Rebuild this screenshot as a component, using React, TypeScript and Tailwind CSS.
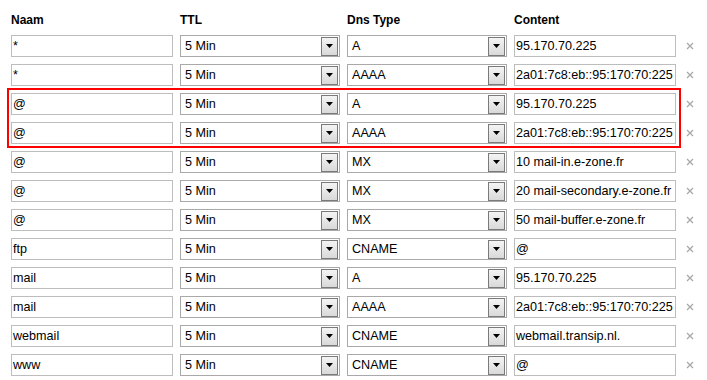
type DnsRow = {
  name: string;
  ttl: string;
  type: string;
  content: string;
};

const rows: DnsRow[] = [
  { name: "*", ttl: "5 Min", type: "A", content: "95.170.70.225" },
  { name: "*", ttl: "5 Min", type: "AAAA", content: "2a01:7c8:eb::95:170:70:225" },
  { name: "@", ttl: "5 Min", type: "A", content: "95.170.70.225" },
  { name: "@", ttl: "5 Min", type: "AAAA", content: "2a01:7c8:eb::95:170:70:225" },
  { name: "@", ttl: "5 Min", type: "MX", content: "10 mail-in.e-zone.fr" },
  { name: "@", ttl: "5 Min", type: "MX", content: "20 mail-secondary.e-zone.fr" },
  { name: "@", ttl: "5 Min", type: "MX", content: "50 mail-buffer.e-zone.fr" },
  { name: "ftp", ttl: "5 Min", type: "CNAME", content: "@" },
  { name: "mail", ttl: "5 Min", type: "A", content: "95.170.70.225" },
  { name: "mail", ttl: "5 Min", type: "AAAA", content: "2a01:7c8:eb::95:170:70:225" },
  { name: "webmail", ttl: "5 Min", type: "CNAME", content: "webmail.transip.nl." },
  { name: "www", ttl: "5 Min", type: "CNAME", content: "@" },
];

function TextBox({ value }: { value: string }) {
  return (
    <div className="flex h-[22px] w-[162px] shrink-0 items-center overflow-hidden whitespace-nowrap border border-[#bdbdbd] bg-white pl-[1px] text-black">
      {value}
    </div>
  );
}

function SelectBox({ value }: { value: string }) {
  return (
    <div className="flex h-[22px] w-[160px] shrink-0 items-center justify-between border border-[#a9a9a9] bg-white pl-[4px] pr-[1px] text-black">
      <span className="whitespace-nowrap">{value}</span>
      <div className="flex h-[19px] w-[17px] items-center justify-center border border-[#7a7a7a] bg-[linear-gradient(#f4f4f4,#d9d9d9)]">
        <svg width="7" height="4" viewBox="0 0 7 4">
          <path d="M0 0h7L3.5 4z" fill="#000" />
        </svg>
      </div>
    </div>
  );
}

function RemoveIcon() {
  return (
    <svg width="8" height="8" viewBox="0 0 8 8" className="ml-[10px] shrink-0">
      <path d="M1 1l6 6M7 1L1 7" stroke="#a8a8a8" strokeWidth="1.3" />
    </svg>
  );
}

function Row({ row }: { row: DnsRow }) {
  return (
    <div className="flex h-[22px] items-center gap-[7px]">
      <TextBox value={row.name} />
      <SelectBox value={row.ttl} />
      <SelectBox value={row.type} />
      <div className="flex items-center">
        <TextBox value={row.content} />
        <RemoveIcon />
      </div>
    </div>
  );
}

export default function App() {
  const before = rows.slice(0, 2);
  const marked = rows.slice(2, 4);
  const after = rows.slice(4);

  return (
    <div className="h-[380px] w-[707px] overflow-hidden bg-white pl-[11px] pt-[13px] font-['Liberation_Sans',Arial,sans-serif] text-[12.6px]">
      <div className="flex h-[15px] items-center gap-[7px] text-[12px] font-bold leading-[15px] text-black">
        <div className="w-[162px]">Naam</div>
        <div className="w-[160px]">TTL</div>
        <div className="w-[160px]">Dns Type</div>
        <div className="w-[162px]">Content</div>
      </div>

      <div className="mt-[7px] flex flex-col gap-[7px]">
        {before.map((r, i) => (
          <Row key={i} row={r} />
        ))}
      </div>

      <div className="-ml-[4px] mt-[2px] flex w-[674px] flex-col gap-[7px] border-2 border-[#ff0000] pb-[2px] pl-[2px] pt-[3px]">
        {marked.map((r, i) => (
          <Row key={i} row={r} />
        ))}
      </div>

      <div className="mt-[3px] flex flex-col gap-[7px]">
        {after.map((r, i) => (
          <Row key={i} row={r} />
        ))}
      </div>
    </div>
  );
}
